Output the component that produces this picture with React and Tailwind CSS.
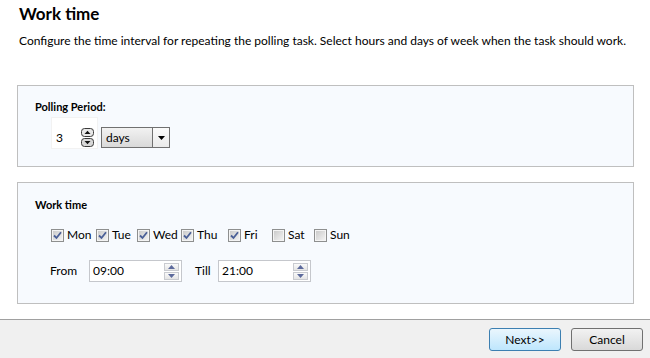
import React, { useState } from 'react';

const days = [
    { name: 'Mon', checked: true, w: 'w-[45px]' },
    { name: 'Tue', checked: true, w: 'w-[41px]' },
    { name: 'Wed', checked: true, w: 'w-[44px]' },
    { name: 'Thu', checked: true, w: 'w-[47px]' },
    { name: 'Fri', checked: true, w: 'w-[44px]' },
    { name: 'Sat', checked: false, w: 'w-[42px]' },
    { name: 'Sun', checked: false, w: 'w-[40px]' },
];

function CheckBox({ checked, onClick }) {
    return (
        <span
            onClick={onClick}
            className="w-[13px] h-[13px] border border-[#8e8f8f] bg-gradient-to-br from-[#dcdcdc] to-[#f6f6f6] flex items-center justify-center shrink-0"
        >
            <span className="w-[11px] h-[11px] border border-[#f4f4f4] bg-gradient-to-br from-[#cbcbcb] to-[#f2f2f2] flex items-center justify-center">
                {checked && (
                    <svg width="9" height="9" viewBox="0 0 9 9">
                        <path d="M1 4.5 L3.5 7 L8 1.2" fill="none" stroke="#4a5f97" strokeWidth="1.8" />
                    </svg>
                )}
            </span>
        </span>
    );
}

function PollSpinner() {
    return (
        <svg width="13" height="19" viewBox="0 0 13 19">
            <rect x="0.5" y="0.5" width="12" height="8" rx="3" fill="#e8e8e8" stroke="#3a3a3a" />
            <path d="M3.5 6 L6.5 2.8 L9.5 6 Z" fill="#111" />
            <rect x="0.5" y="10.5" width="12" height="8" rx="3" fill="#d8d8d8" stroke="#3a3a3a" />
            <path d="M3.5 13 L6.5 16.2 L9.5 13 Z" fill="#111" />
        </svg>
    );
}

function TimeInput({ value }) {
    return (
        <div className="w-[93px] h-[22px] border border-[#c5c7cc] bg-white flex items-center pl-[3px] pr-[2px]">
            <span className="flex-1 text-[12px] leading-none text-black">{value}</span>
            <div className="flex flex-col gap-[1px]">
                <div className="w-[15px] h-[8px] border border-[#c9cbd0] bg-gradient-to-b from-[#fafafa] to-[#e5e5e5] flex items-center justify-center">
                    <svg width="7" height="4" viewBox="0 0 7 4"><path d="M0 4 L3.5 0 L7 4 Z" fill="#5d6a9c" /></svg>
                </div>
                <div className="w-[15px] h-[8px] border border-[#c9cbd0] bg-gradient-to-b from-[#fafafa] to-[#e5e5e5] flex items-center justify-center">
                    <svg width="7" height="4" viewBox="0 0 7 4"><path d="M0 0 L3.5 4 L7 0 Z" fill="#5d6a9c" /></svg>
                </div>
            </div>
        </div>
    );
}

export default function App() {
    const [checks, setChecks] = useState(days.map(d => d.checked));

    const toggle = (i) => {
        const next = [...checks];
        next[i] = !next[i];
        setChecks(next);
    };

    return (
        <div className="w-[650px] h-[358px] bg-white flex flex-col font-['Lato','Liberation_Sans',sans-serif] text-black overflow-hidden">
            {/* Header */}
            <div className="pl-[19px] pt-[3px]">
                <h1 className="text-[17px] leading-[22px] font-bold">Work time</h1>
                <p className="text-[12px] leading-[16px] mt-[8px]">
                    Configure the time interval for repeating the polling task. Select hours and days of week when the task should work.
                </p>
            </div>

            {/* Polling period */}
            <div className="mx-[17px] w-[617px] mt-[36px] h-[82px] border border-[#bfbfbf] bg-[#f7fafe] pl-[17px] pt-[14px]">
                <div className="text-[11px] leading-[14px] font-bold">Polling Period:</div>
                <div className="flex items-end mt-[3px] ml-[16px]">
                    <div className="w-[47px] h-[32px] bg-white border border-[#f2f2f2] flex items-end pb-[1px] pl-[4px] pr-[3px]">
                        <span className="flex-1 text-[12px] leading-[19px]">3</span>
                        <PollSpinner />
                    </div>
                    <div className="ml-[3px] mb-[1px] w-[69px] h-[21px] border border-[#707070] bg-gradient-to-b from-[#f2f2f2] to-[#d9d9d9] flex items-center">
                        <span className="flex-1 pl-[4px] text-[12px] leading-none">days</span>
                        <div className="w-[17px] h-full border-l border-[#707070] bg-gradient-to-b from-[#fbfbfb] to-[#eaeaea] flex items-center justify-center">
                            <svg width="7" height="4" viewBox="0 0 7 4"><path d="M0 0 L7 0 L3.5 4 Z" fill="#000" /></svg>
                        </div>
                    </div>
                </div>
            </div>

            {/* Work time */}
            <div className="mx-[17px] w-[617px] mt-[15px] h-[122px] border border-[#bfbfbf] bg-[#f7fafe] pl-[17px] pt-[15px]">
                <div className="text-[11px] leading-[14px] font-bold">Work time</div>
                <div className="flex items-center mt-[15px] ml-[16px] h-[16px]">
                    {days.map((d, i) => (
                        <label key={d.name} className={`flex items-center gap-[3px] ${d.w}`}>
                            <CheckBox checked={checks[i]} onClick={() => toggle(i)} />
                            <span className="text-[12px] leading-none">{d.name}</span>
                        </label>
                    ))}
                </div>
                <div className="flex items-center mt-[17px] ml-[15px]">
                    <span className="text-[12px] w-[39px]">From</span>
                    <TimeInput value="09:00" />
                    <span className="text-[12px] ml-[13px] w-[23px]">Till</span>
                    <TimeInput value="21:00" />
                </div>
            </div>

            {/* Footer */}
            <div className="mt-auto h-[39px] border-t border-[#a0a0a0] bg-[#f0f0f0] flex items-center justify-end gap-[10px] pr-[7px] pt-[1px]">
                <button className="w-[72px] h-[23px] rounded-[3px] border border-[#3c7fb1] bg-gradient-to-b from-[#eaf6fd] to-[#bee6fd] text-[12px] text-black">
                    Next&gt;&gt;
                </button>
                <button className="w-[72px] h-[23px] rounded-[3px] border border-[#707070] bg-gradient-to-b from-[#f2f2f2] to-[#d9d9d9] text-[12px] text-black">
                    Cancel
                </button>
            </div>
        </div>
    );
}
